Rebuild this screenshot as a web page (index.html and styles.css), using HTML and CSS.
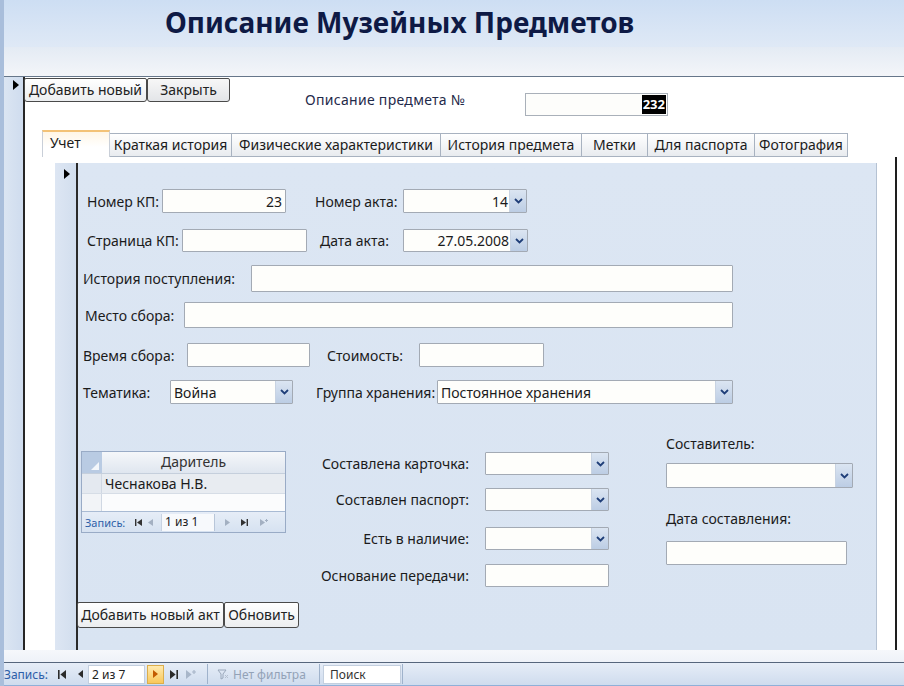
FILE: index.html
```html
<!DOCTYPE html>
<html lang="ru">
<head>
<meta charset="utf-8">
<title>Описание Музейных Предметов</title>
<link rel="stylesheet" href="styles.css">
</head>
<body>
<div class="window">
  <header class="title-bar"><h1 class="title">Описание Музейных Предметов</h1></header>
  <div class="header-strip"></div>
  <div class="form-body">
    <div class="selector"><span class="tri"></span></div>
    <div class="detail">
      <div class="top-row">
        <div class="btn-group">
          <button class="btn btn-add">Добавить новый</button>
          <button class="btn btn-close">Закрыть</button>
        </div>
        <span class="id-label">Описание предмета №</span>
        <div class="id-box"><span class="sel">232</span></div>
      </div>
      <div class="tabs">
        <div class="tab active">Учет</div>
        <div class="tab">Краткая история</div>
        <div class="tab">Физические характеристики</div>
        <div class="tab">История предмета</div>
        <div class="tab">Метки</div>
        <div class="tab">Для паспорта</div>
        <div class="tab">Фотография</div>
      </div>
      <div class="tab-body">
        <div class="panel">
          <div class="sub-selector"><span class="tri"></span></div>
          <div class="panel-content">
            <div class="row r1">
              <span class="lbl w75">Номер КП:</span>
              <div class="field num w124">23</div>
              <span class="lbl ml29 w88">Номер акта:</span>
              <div class="field combo w124"><span class="val right">14</span><span class="dd"><svg width="9" height="6" viewBox="0 0 9 6"><path d="M1 1 L4.5 4.5 L8 1" /></svg></span></div>
            </div>
            <div class="row r2">
              <span class="lbl w95">Страница КП:</span>
              <div class="field w125"></div>
              <span class="lbl ml13 w83">Дата акта:</span>
              <div class="field combo w125"><span class="val right">27.05.2008</span><span class="dd"><svg width="9" height="6" viewBox="0 0 9 6"><path d="M1 1 L4.5 4.5 L8 1" /></svg></span></div>
            </div>
            <div class="row r3">
              <span class="lbl w168">История поступления:</span>
              <div class="field w482"></div>
            </div>
            <div class="row r4">
              <span class="lbl w99">Место сбора:</span>
              <div class="field w549"></div>
            </div>
            <div class="row r5">
              <span class="lbl w104">Время сбора:</span>
              <div class="field w123"></div>
              <span class="lbl ml17 w92">Стоимость:</span>
              <div class="field w125"></div>
            </div>
            <div class="row r6">
              <span class="lbl w87">Тематика:</span>
              <div class="field combo w123"><span class="val">Война</span><span class="dd"><svg width="9" height="6" viewBox="0 0 9 6"><path d="M1 1 L4.5 4.5 L8 1" /></svg></span></div>
              <span class="lbl ml23 w121">Группа хранения:</span>
              <div class="field combo w296"><span class="val">Постоянное хранения</span><span class="dd"><svg width="9" height="6" viewBox="0 0 9 6"><path d="M1 1 L4.5 4.5 L8 1" /></svg></span></div>
            </div>

            <div class="bottom">
              <div class="subform">
                <div class="sf-head"><span class="sf-corner"><svg width="10" height="10" viewBox="0 0 10 10"><path d="M9 1 L9 9 L1 9 Z" fill="#f4f7fb"/></svg></span><span class="sf-col">Даритель</span></div>
                <div class="sf-row"><span class="sf-sel"></span><span class="sf-cell">Чеснакова Н.В.</span></div>
                <div class="sf-empty"><span class="sf-sel light"></span></div>
                <div class="sf-nav">
                  <span class="sf-nav-label">Запись:</span>
                  <svg class="ni first" width="7" height="7" viewBox="0 0 7 7"><rect x="0" y="0" width="1.4" height="7"/><path d="M7 0 L2 3.5 L7 7 Z"/></svg>
                  <svg class="ni prev dim" width="5" height="7" viewBox="0 0 5 7"><path d="M5 0 L0 3.5 L5 7 Z"/></svg>
                  <span class="sf-box">1 из 1</span>
                  <svg class="ni next dim" width="5" height="7" viewBox="0 0 5 7"><path d="M0 0 L5 3.5 L0 7 Z"/></svg>
                  <svg class="ni last" width="7" height="7" viewBox="0 0 7 7"><path d="M0 0 L5 3.5 L0 7 Z"/><rect x="5.6" y="0" width="1.4" height="7"/></svg>
                  <svg class="ni new dim" width="8" height="7" viewBox="0 0 8 7"><path d="M0 0 L5 3.5 L0 7 Z"/><path d="M6.5 0 v3 M5 1.5 h3" stroke-width="1"/></svg>
                </div>
              </div>

              <div class="mid">
                <div class="mid-row">
                  <span class="mid-lbl">Составлена карточка:</span>
                  <div class="field combo w124"><span class="val"></span><span class="dd"><svg width="9" height="6" viewBox="0 0 9 6"><path d="M1 1 L4.5 4.5 L8 1" /></svg></span></div>
                </div>
                <div class="mid-row m13">
                  <span class="mid-lbl">Составлен паспорт:</span>
                  <div class="field combo w124"><span class="val"></span><span class="dd"><svg width="9" height="6" viewBox="0 0 9 6"><path d="M1 1 L4.5 4.5 L8 1" /></svg></span></div>
                </div>
                <div class="mid-row m16">
                  <span class="mid-lbl">Есть в наличие:</span>
                  <div class="field combo w124"><span class="val"></span><span class="dd"><svg width="9" height="6" viewBox="0 0 9 6"><path d="M1 1 L4.5 4.5 L8 1" /></svg></span></div>
                </div>
                <div class="mid-row m14">
                  <span class="mid-lbl">Основание передачи:</span>
                  <div class="field w124"></div>
                </div>
              </div>

              <div class="right-col">
                <span class="rc-lbl">Составитель:</span>
                <div class="field combo rc-combo"><span class="val"></span><span class="dd"><svg width="9" height="6" viewBox="0 0 9 6"><path d="M1 1 L4.5 4.5 L8 1" /></svg></span></div>
                <span class="rc-lbl rc-lbl2">Дата составления:</span>
                <div class="field rc-input"></div>
              </div>
            </div>

            <div class="act-buttons">
              <button class="btn btn-act">Добавить новый акт</button>
              <button class="btn btn-refresh">Обновить</button>
            </div>
          </div>
        </div>
      </div>
    </div>
  </div>
  <div class="footer-gap"></div>
  <nav class="navbar">
    <span class="nav-label">Запись:</span>
    <svg class="nb-first" width="8" height="9" viewBox="0 0 8 9"><rect x="0" y="0" width="1.6" height="9"/><path d="M8 0 L2.4 4.5 L8 9 Z"/></svg>
    <svg class="nb-prev" width="5" height="8" viewBox="0 0 5 8"><path d="M5 0 L0 4 L5 8 Z"/></svg>
    <span class="nb-box">2 из 7</span>
    <span class="nb-next"><svg width="5" height="8" viewBox="0 0 5 8"><path d="M0 0 L5 4 L0 8 Z"/></svg></span>
    <svg class="nb-last" width="8" height="9" viewBox="0 0 8 9"><path d="M0 0 L5.6 4.5 L0 9 Z"/><rect x="6.4" y="0" width="1.6" height="9"/></svg>
    <svg class="nb-new" width="10" height="9" viewBox="0 0 10 9"><path d="M0 0 L5.6 4.5 L0 9 Z"/><path d="M8 0 v4 M6 2 h4" stroke-width="1.2"/></svg>
    <span class="nb-sep"></span>
    <svg class="nb-funnel" width="12" height="11" viewBox="0 0 12 11"><path d="M1 1 H9 L6 5 V9 L4 10 V5 Z" fill="none" stroke="#9aa8bb" stroke-width="1"/><path d="M8 6 L11 9 M11 6 L8 9" stroke="#b4bfcf" stroke-width="1"/></svg>
    <span class="nb-filter">Нет фильтра</span>
    <span class="nb-sep"></span>
    <span class="nb-search">Поиск</span>
    <span class="nb-sep"></span>
  </nav>
</div>
</body>
</html>
```

FILE: styles.css
```css
* { box-sizing: border-box; }
html, body { margin: 0; padding: 0; }
body {
  width: 904px;
  height: 686px;
  overflow: hidden;
  font-family: "Noto Sans", "Open Sans", sans-serif;
  font-size: 14px;
  color: #1b1b1b;
  background: #fff;
}
.window {
  width: 904px;
  height: 686px;
  border-left: 4px solid #a9bedb;
  display: flex;
  flex-direction: column;
}
.title-bar {
  height: 47px;
  padding-left: 161px;
  padding-bottom: 3px;
  display: flex;
  align-items: center;
  background: linear-gradient(#cddef3, #dfe9f6);
}
.title {
  margin: 0;
  font-size: 28px;
  font-weight: 700;
  color: #0e1a45;
  letter-spacing: 0;
  line-height: 1;
}
.header-strip {
  height: 30px;
  border-bottom: 1px solid #66768a;
  background: linear-gradient(#e4ebf4, #f3f5f9);
}
.form-body {
  height: 573px;
  display: flex;
}
.selector {
  width: 21px;
  border-right: 2px solid #262626;
  background: linear-gradient(90deg, #dbe5f2, #cfdcee);
  padding-top: 3px;
  padding-left: 9px;
}
.tri {
  display: block;
  width: 0;
  height: 0;
  border-left: 6px solid #000;
  border-top: 5px solid transparent;
  border-bottom: 5px solid transparent;
}
.detail {
  flex: 1;
  background: #fff;
  display: flex;
  flex-direction: column;
}
.top-row {
  height: 53px;
  display: flex;
  align-items: flex-start;
}
.btn-group {
  display: flex;
  margin-left: -1px;
  margin-top: 1px;
}
.btn {
  font-family: "Noto Sans", "Open Sans", sans-serif;
  font-size: 14px;
  color: #222;
  height: 24px;
  padding: 0;
  border: 1px solid #4a4a4a;
  border-radius: 2px 2px 3px 3px;
  background: linear-gradient(#ffffff, #eceef0);
  line-height: 20px;
}
.btn-add { width: 123px; }
.btn-close { width: 83px; background: linear-gradient(#f7f7f7, #e3e5e8); }
.id-label {
  width: 220px;
  margin-left: 75px;
  margin-top: 14px;
  line-height: 18px;
  font-size: 14px;
  color: #1f2a4a;
  letter-spacing: 0.3px;
}
.id-box {
  width: 143px;
  height: 23px;
  margin-top: 16px;
  border: 1px solid #a9b0b9;
  background: #fdfdfb;
  display: flex;
  justify-content: flex-end;
  align-items: center;
  padding-right: 1px;
}
.sel {
  background: #000;
  color: #fff;
  height: 19px;
  line-height: 19px;
  padding: 0 1px;
  font-size: 13px;
  font-weight: 700;
}
.tabs {
  height: 27px;
  margin-left: 17px;
  display: grid;
  grid-template-columns: 68px 122px 209px 141px 66px 107px 93px;
  align-items: end;
}
.tab {
  height: 24px;
  border: 1px solid #a8b2c0;
  border-left: none;
  background: linear-gradient(#ffffff, #e8ebef);
  text-align: center;
  line-height: 21px;
  font-size: 14px;
  color: #1b1b1b;
  white-space: nowrap;
}
.tab.active {
  height: 27px;
  border: 1px solid #c9cfd8;
  border-top: 2px solid #f3c277;
  border-bottom: none;
  background: linear-gradient(#fff6e6, #ffffff 60%);
  text-align: left;
  padding-left: 7px;
  line-height: 22px;
}
.tab-body {
  height: 493px;
  width: 872px;
  border-right: 2px solid #1e1e1e;
  padding-top: 6px;
  padding-left: 30px;
}
.panel {
  width: 822px;
  height: 487px;
  display: flex;
  border-right: 1px solid #b5c2d3;
}
.sub-selector {
  width: 23px;
  border-right: 2px solid #2a2a2a;
  background: linear-gradient(90deg, #dde6f3, #d2deee);
  padding-top: 6px;
  padding-left: 9px;
}
.panel-content {
  flex: 1;
  background: linear-gradient(#dce6f3, #d9e4f2);
  display: flex;
  flex-direction: column;
}
.row {
  display: flex;
  align-items: center;
}
.r1 { margin-top: 26px; height: 24px; padding-left: 9px; }
.r2 { margin-top: 16px; height: 23px; padding-left: 9px; }
.r3 { margin-top: 13px; height: 27px; padding-left: 5px; }
.r4 { margin-top: 10px; height: 26px; padding-left: 7px; }
.r5 { margin-top: 15px; height: 24px; padding-left: 5px; }
.r6 { margin-top: 13px; height: 24px; padding-left: 5px; }
.lbl {
  white-space: nowrap;
  flex: none;
  font-size: 14px;
}
.w75 { width: 75px; }
.w83 { width: 83px; }
.w87 { width: 87px; }
.w88 { width: 88px; }
.w92 { width: 92px; }
.w95 { width: 95px; }
.w99 { width: 99px; }
.w104 { width: 104px; }
.w121 { width: 121px; }
.w123 { width: 123px; }
.w124 { width: 124px; }
.w125 { width: 125px; }
.w168 { width: 168px; }
.w296 { width: 296px; }
.w482 { width: 482px; }
.w549 { width: 549px; }
.ml13 { margin-left: 13px; }
.ml17 { margin-left: 17px; }
.ml23 { margin-left: 23px; }
.ml29 { margin-left: 29px; }
.field {
  flex: none;
  height: 100%;
  background: #fefefb;
  border: 1px solid #a3aab4;
  border-radius: 1px;
  display: flex;
  align-items: center;
  padding: 0 3px;
  font-size: 14px;
  white-space: nowrap;
}
.field.num { justify-content: flex-end; }
.field.combo { padding-right: 0; }
.val { flex: 1; }
.val.right { text-align: right; padding-right: 1px; }
.dd {
  width: 17px;
  height: 100%;
  display: flex;
  align-items: center;
  justify-content: center;
  background: linear-gradient(#dbe5f2, #bccde4);
  border-left: 1px solid #c8d3e2;
}
.dd svg path {
  fill: none;
  stroke: #1f3e78;
  stroke-width: 1.8;
}
.bottom {
  display: flex;
  align-items: flex-start;
  margin-top: 31px;
  height: 153px;
}
.subform {
  margin-left: 3px;
  margin-top: 16px;
  width: 205px;
  height: 82px;
  border: 1px solid #99abc6;
  background: #fff;
  display: flex;
  flex-direction: column;
}
.sf-head {
  height: 22px;
  display: flex;
  border-bottom: 1px solid #c5cfdc;
  background: linear-gradient(#f5f7fa, #dfe6ef);
}
.sf-corner {
  width: 20px;
  background: #b9cbe3;
  display: flex;
  align-items: flex-end;
  justify-content: flex-end;
  padding: 0 2px 2px 0;
}
.sf-col {
  flex: 1;
  text-align: center;
  line-height: 20px;
  color: #333;
  font-size: 14px;
}
.sf-row {
  height: 20px;
  display: flex;
  background: #e8ecf1;
  border-bottom: 1px solid #d6dde6;
}
.sf-sel {
  width: 20px;
  background: #e4e9f0;
  border-right: 1px solid #d0d8e3;
}
.sf-sel.light { background: #f2f4f7; }
.sf-cell {
  flex: 1;
  padding-left: 3px;
  line-height: 19px;
  font-size: 14px;
}
.sf-empty {
  height: 17px;
  display: flex;
  background: #fbfcfd;
}
.sf-nav {
  flex: 1;
  display: flex;
  align-items: center;
  border-top: 1px solid #a9bbd4;
  background: linear-gradient(#e6edf7, #d6e2f1);
  font-size: 11px;
  padding-left: 3px;
}
.sf-nav-label {
  color: #2d5ea8;
  width: 50px;
}
.ni { fill: #333; stroke: #333; stroke-width: 0; }
.ni.dim { fill: #a3b0c2; stroke: #a3b0c2; }
.ni.new path + path { stroke-width: 1; }
.ni.prev { margin-left: 6px; }
.sf-box {
  margin-left: 8px;
  width: 54px;
  height: 17px;
  line-height: 16px;
  background: #f7f9fc;
  border-right: 1px solid #b8c6d9;
  border-left: 1px solid #c8d3e2;
  padding-left: 3px;
  font-size: 12px;
  color: #222;
}
.ni.next { margin-left: 10px; }
.ni.last { margin-left: 11px; }
.ni.new { margin-left: 12px; }
.mid {
  margin-left: 13px;
  margin-top: 17px;
  display: flex;
  flex-direction: column;
}
.mid-row {
  height: 23px;
  display: flex;
  align-items: center;
}
.m13 { margin-top: 13px; }
.m14 { margin-top: 14px; }
.m16 { margin-top: 16px; }
.mid-lbl {
  width: 170px;
  margin-right: 16px;
  text-align: right;
  white-space: nowrap;
  font-size: 14px;
}
.right-col {
  margin-left: 57px;
  width: 187px;
  display: flex;
  flex-direction: column;
  align-items: flex-start;
}
.rc-lbl {
  line-height: 18px;
  font-size: 14px;
}
.rc-lbl2 { margin-top: 22px; }
.rc-combo {
  margin-top: 10px;
  width: 187px;
  height: 25px;
}
.rc-input {
  margin-top: 13px;
  width: 181px;
  height: 24px;
}
.act-buttons {
  display: flex;
  margin-left: -1px;
  margin-top: 14px;
}
.btn-act { width: 147px; height: 26px; }
.btn-refresh { width: 75px; height: 26px; }
.footer-gap {
  height: 12px;
  background: linear-gradient(#f6f8fb, #eef2f8);
}
.navbar {
  height: 24px;
  border-top: 1px solid #56667c;
  border-bottom: 1px solid #8fb0d8;
  background: linear-gradient(#e6edf7, #cfdcee);
  display: flex;
  align-items: center;
  font-size: 12px;
}
.nav-label {
  width: 54px;
  color: #2d5ea8;
  padding-left: 0;
}
.navbar svg { fill: #2b2b2b; stroke: #2b2b2b; stroke-width: 0; }
.nb-prev { margin-left: 12px; }
.nb-box {
  margin-left: 5px;
  width: 57px;
  height: 19px;
  line-height: 17px;
  background: #fff;
  border: 1px solid #c3cfdf;
  padding-left: 3px;
  color: #222;
  font-size: 12px;
}
.nb-next {
  margin-left: 2px;
  width: 17px;
  height: 19px;
  display: flex;
  align-items: center;
  justify-content: center;
  background: linear-gradient(#ffeab0, #f9c85a);
  border: 1px solid #dcae4c;
}
.navbar .nb-next svg { fill: #c25a00; }
.nb-last { margin-left: 6px; }
.navbar .nb-new { margin-left: 8px; fill: #a8b6c9; stroke: #a8b6c9; }
.navbar .nb-new path + path { stroke-width: 1.2; }
.nb-sep {
  width: 1px;
  height: 20px;
  background: #9fb2cb;
  margin-left: 11px;
}
.navbar .nb-funnel { margin-left: 9px; stroke-width: 1; }
.navbar .nb-funnel path { fill: none; }
.nb-filter {
  margin-left: 4px;
  width: 86px;
  color: #93a2b7;
}
.nb-filter + .nb-sep { margin-left: 0; }
.nb-search {
  margin-left: 3px;
  width: 78px;
  height: 19px;
  line-height: 17px;
  background: #fff;
  border: 1px solid #c3cfdf;
  padding-left: 6px;
  color: #333;
}
.nb-search + .nb-sep { margin-left: 1px; }
```
